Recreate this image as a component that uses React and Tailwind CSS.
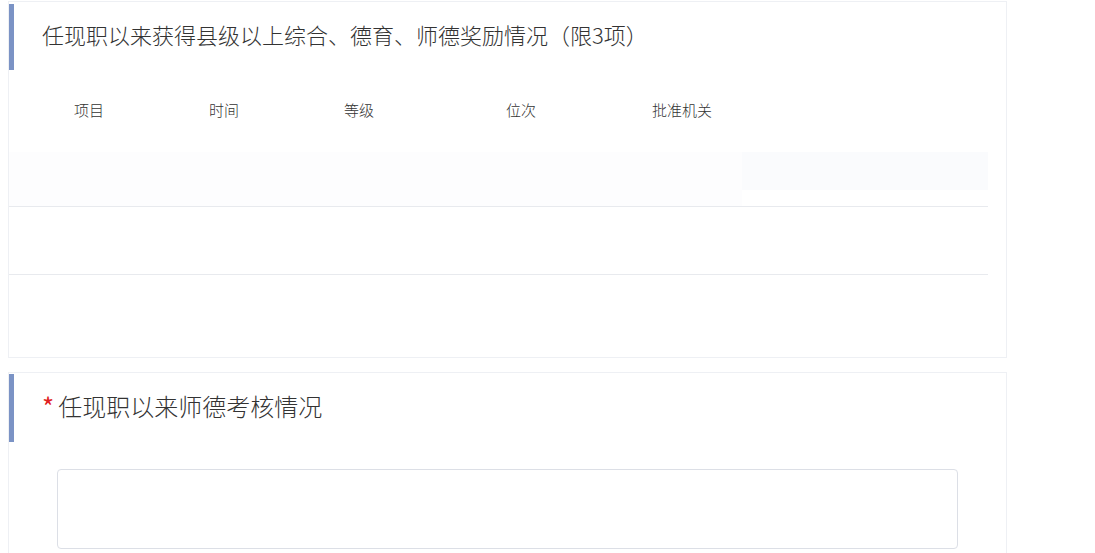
const columns = [
  { label: "项目", width: "w-[135px]" },
  { label: "时间", width: "w-[135px]" },
  { label: "等级", width: "w-[162px]" },
  { label: "位次", width: "w-[146px]" },
  { label: "批准机关", width: "w-[150px]" },
];

const font = { fontFamily: '"Noto Sans CJK SC", "Noto Sans", sans-serif' };

const SectionTitle = ({ children, height, size }) => (
  <div className={`flex items-center ${height}`}>
    <div className="h-full w-[5px] bg-[#7b93c5]" />
    <div className={`pl-[28px] pb-[5px] text-[#333] font-light ${size}`}>{children}</div>
  </div>
);

export default function App() {
  return (
    <div className="bg-white min-h-screen w-[1095px] h-[553px] overflow-hidden" style={font}>
      {/* 奖励情况 */}
      <div className="ml-2 mt-px w-[999px] h-[357px] border border-[#eef0f4] bg-white">
        <div className="pt-[2px]">
          <SectionTitle height="h-[66px]" size="text-[22px]">
            任现职以来获得县级以上综合、德育、师德奖励情况（限3项）
          </SectionTitle>
        </div>

        <div className="w-[979px]">
          {/* 表头 */}
          <div className="flex items-center h-[82px] pl-[65px] pb-[2px] text-[15px] text-[#333] font-light">
            {columns.map((col) => (
              <div key={col.label} className={col.width}>
                {col.label}
              </div>
            ))}
          </div>
          <div className="flex h-[55px] border-b border-[#e8eaee]">
            <div className="flex-1 bg-[#fdfdfe]" />
            <div className="w-[246px] h-[38px] bg-[#fafbfd]" />
          </div>
          <div className="h-[68px] border-b border-[#e8eaee]" />
        </div>
      </div>

      {/* 师德考核 */}
      <div className="ml-2 mt-[14px] w-[999px] h-[200px] border border-[#eef0f4] bg-white">
        <div className="pt-px">
          <SectionTitle height="h-[68px]" size="text-[24px]">
            <span className="inline-block text-[#e02020] text-[26px] font-normal leading-none align-top mr-[4px] relative top-[5px]">*</span>
            任现职以来师德考核情况
          </SectionTitle>
        </div>
        <div className="pl-[48px] pt-[27px]">
          <textarea className="block w-[901px] h-[80px] border border-[#dcdfe6] rounded resize-none outline-none" />
        </div>
      </div>
    </div>
  );
}
